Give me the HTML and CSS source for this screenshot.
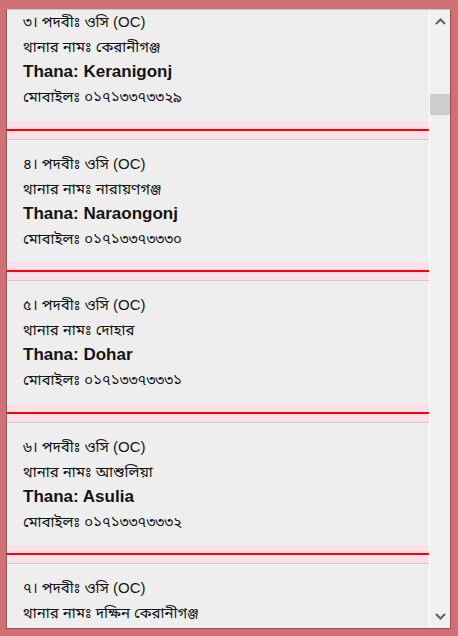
FILE: index.html
```html
<!DOCTYPE html>
<html lang="bn">
<head>
    <meta charset="UTF-8">
    <meta name="viewport" content="width=device-width, initial-scale=1.0">
    <title>থানা তালিকা</title>
    <link rel="stylesheet" href="styles.css">
</head>
<body>

    <div class="frame">
        <div class="window">

            <!-- তালিকা -->
            <div class="viewport">
                <div class="list">
                    <div class="item">
                        <div class="item-body">
                            <p class="line">৩। পদবীঃ ওসি (OC)</p>
                            <p class="line">থানার নামঃ কেরানীগঞ্জ</p>
                            <p class="line thana">Thana: Keranigonj</p>
                            <p class="line">মোবাইলঃ ০১৭১৩৩৭৩৩২৯</p>
                        </div>
                        <div class="sep"></div>
                    </div>
                    <div class="item">
                        <div class="item-body">
                            <p class="line">৪। পদবীঃ ওসি (OC)</p>
                            <p class="line">থানার নামঃ নারায়ণগঞ্জ</p>
                            <p class="line thana">Thana: Naraongonj</p>
                            <p class="line">মোবাইলঃ ০১৭১৩৩৭৩৩৩০</p>
                        </div>
                        <div class="sep"></div>
                    </div>
                    <div class="item">
                        <div class="item-body">
                            <p class="line">৫। পদবীঃ ওসি (OC)</p>
                            <p class="line">থানার নামঃ দোহার</p>
                            <p class="line thana">Thana: Dohar</p>
                            <p class="line">মোবাইলঃ ০১৭১৩৩৭৩৩৩১</p>
                        </div>
                        <div class="sep"></div>
                    </div>
                    <div class="item">
                        <div class="item-body">
                            <p class="line">৬। পদবীঃ ওসি (OC)</p>
                            <p class="line">থানার নামঃ আশুলিয়া</p>
                            <p class="line thana">Thana: Asulia</p>
                            <p class="line">মোবাইলঃ ০১৭১৩৩৭৩৩৩২</p>
                        </div>
                        <div class="sep"></div>
                    </div>
                    <div class="item">
                        <div class="item-body">
                            <p class="line">৭। পদবীঃ ওসি (OC)</p>
                            <p class="line">থানার নামঃ দক্ষিন কেরানীগঞ্জ</p>
                        </div>
                    </div>
                </div>
            </div>

            <!-- স্ক্রলবার -->
            <div class="scrollbar">
                <svg class="arrow" width="11" height="7" viewBox="0 0 11 7">
                    <path d="M1 6 L5.5 1.5 L10 6" fill="none" stroke="#606060" stroke-width="2"/>
                </svg>
                <div class="track">
                    <div class="thumb"></div>
                </div>
                <svg class="arrow" width="11" height="7" viewBox="0 0 11 7">
                    <path d="M1 1 L5.5 5.5 L10 1" fill="none" stroke="#606060" stroke-width="2"/>
                </svg>
            </div>

        </div>
    </div>

</body>
</html>
```

FILE: styles.css
```css
html, body {
    margin: 0;
    padding: 0;
}
body {
    font-family: "Liberation Sans", Arial, "Noto Sans Bengali", "Noto Sans", sans-serif;
    color: #141414;
    background: #d07074;
}
.frame {
    width: 458px;
    height: 636px;
    box-sizing: border-box;
    padding: 9px 7px 7px 6px;
    background: #d07074;
}
.window {
    display: flex;
    height: 100%;
    box-sizing: border-box;
    border: 1px solid #8e5558;
    border-top-color: #c4c4c4;
    background: #efefef;
}
.viewport {
    flex: 1;
    overflow: hidden;
}
.list {
    margin-top: -13px;
}
.item-body {
    border-top: 1px solid #cccccc;
    background: #eeeeee;
    padding: 11px 15px 11.5px 16px;
}
.line {
    margin: 0;
    font-size: 15px;
    line-height: 25px;
    white-space: nowrap;
}
.thana {
    font-size: 17px;
    font-weight: bold;
}
.sep {
    height: 18px;
    background: #fde0e7;
    display: flex;
    align-items: center;
}
.sep::before {
    content: "";
    display: block;
    width: 100%;
    height: 2px;
    background: #ff0000;
}
.scrollbar {
    width: 20px;
    border-left: 1px solid #ffffff;
    background: #f0f0f0;
    display: flex;
    flex-direction: column;
    align-items: center;
}
.arrow {
    margin: 8px 0;
    flex: none;
}
.track {
    flex: 1;
    width: 100%;
}
.thumb {
    margin-top: 61px;
    height: 21px;
    background: #cdcdcd;
}
```
